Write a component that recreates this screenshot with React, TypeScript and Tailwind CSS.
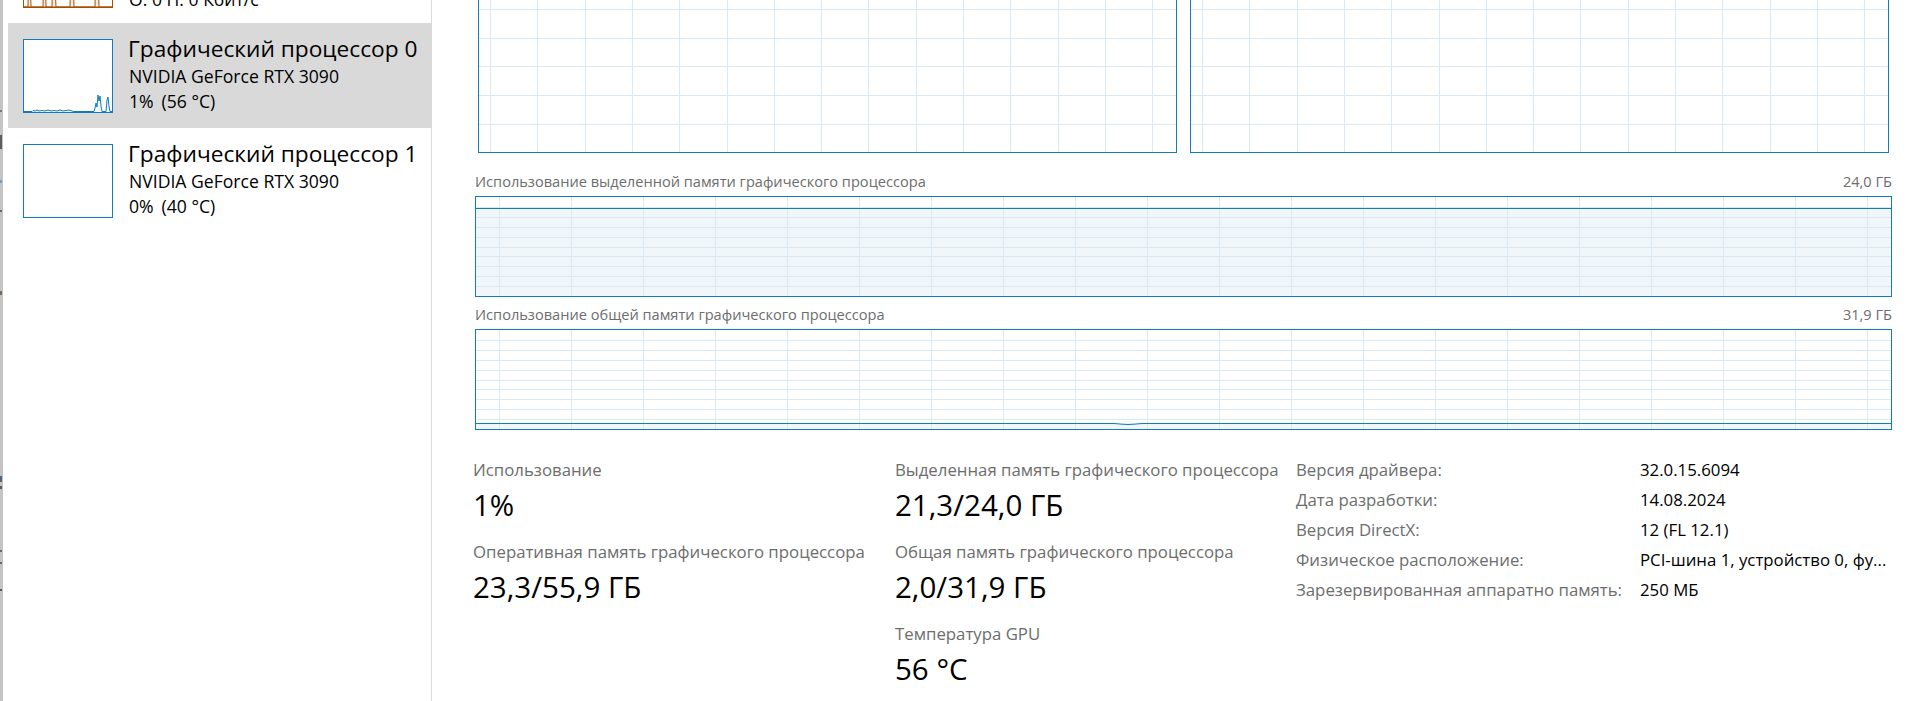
import React from "react";

const BLUE = "#117dbb";
const GRID = "#d9eaf4";
const FILL = "#f1f6fa";

type GridProps = {
  w: number;
  h: number;
  ox: number;
  sx: number;
  oy: number;
  sy: number;
  lineY?: number;
  path?: string;
};

function Grid({ w, h, ox, sx, oy, sy, lineY, path }: GridProps) {
  const vs: number[] = [];
  for (let x = ox; x < w; x += sx) vs.push(Math.round(x));
  const hs: number[] = [];
  for (let y = oy; y < h; y += sy) hs.push(Math.round(y));
  return (
    <svg width={w} height={h} className="block">
      {lineY !== undefined && (
        <rect x={0} y={lineY} width={w} height={h - lineY} fill={FILL} />
      )}
      <g shapeRendering="crispEdges">
        {hs.map((y) => (
          <line key={"h" + y} x1={0} x2={w} y1={y + 0.5} y2={y + 0.5} stroke={GRID} strokeWidth={1} />
        ))}
        {vs.map((x) => (
          <line key={"v" + x} x1={x + 0.5} x2={x + 0.5} y1={0} y2={h} stroke={GRID} strokeWidth={1} />
        ))}
      </g>
      {lineY !== undefined && !path && (
        <line x1={0} x2={w} y1={lineY + 0.5} y2={lineY + 0.5} stroke={BLUE} strokeWidth={1} shapeRendering="crispEdges" />
      )}
      {path && <path d={path} fill="none" stroke={BLUE} strokeWidth={1} />}
    </svg>
  );
}

const marks = [
  { t: 110, h: 2, c: "#7a7a7a" },
  { t: 135, h: 14, c: "#5c5c5c" },
  { t: 180, h: 3, c: "#6f9fc4" },
  { t: 210, h: 2, c: "#6a6a6a" },
  { t: 291, h: 4, c: "#7a6a5a" },
  { t: 476, h: 6, c: "#4f6478" },
  { t: 486, h: 3, c: "#5a5a5a" },
  { t: 550, h: 2, c: "#6a6a6a" },
  { t: 562, h: 2, c: "#6a6a6a" },
  { t: 589, h: 2, c: "#5a5a5a" },
];

function LeftStrip() {
  let prev = 0;
  return (
    <div className="w-[3px] shrink-0 h-full bg-[#c4c4c4] flex flex-col">
      {marks.map((m, i) => {
        const mt = m.t - prev;
        prev = m.t + m.h;
        return (
          <div key={i} className="w-[2px] shrink-0" style={{ marginTop: mt, height: m.h, background: m.c }} />
        );
      })}
    </div>
  );
}

function EthernetThumb() {
  return (
    <div className="w-[90px] h-[74px] border border-[#a74f01] shrink-0 bg-white">
      <svg width={88} height={72} className="block">
        <path
          d="M0 72 L4 72 L5 20 L6 40 L7 72 L19 72 L20 30 L21 10 L22 72 L28 72 L29 25 L31 50 L32 72 L46 72 L47 35 L48 15 L50 72 L71 72 L72 28 L74 45 L75 72 L88 72 Z"
          fill="#fbeee2"
          stroke="#a74f01"
          strokeWidth={1}
        />
      </svg>
    </div>
  );
}

function GpuThumb({ active }: { active: boolean }) {
  return (
    <div className="w-[90px] h-[74px] border border-[#117dbb] shrink-0 bg-white">
      {active && (
        <svg width={88} height={72} className="block">
          <path
            d="M0 71.5 L8 71.5 L9 70.5 L11 71 L13 70 L15 71 L18 70.5 L21 71 L24 70 L27 71 L30 70.5 L33 71 L36 70 L39 71 L42 70.5 L45 70 L48 71 L50 71.5 L70 71.5 L71 68 L72 63 L73 67 L74 55 L75 61 L76 56 L77 66 L78 71.5 L82 71.5 L83 60 L84 57 L85 66 L86 71.5 L88 71.5"
            fill={FILL}
            stroke={BLUE}
            strokeWidth={1}
          />
        </svg>
      )}
    </div>
  );
}

function SideItem({
  thumb,
  title,
  sub,
  stat,
  selected,
  h,
  statClass = "",
}: {
  thumb: React.ReactNode;
  title: string;
  sub: string;
  stat: React.ReactNode;
  selected?: boolean;
  h: string;
  statClass?: string;
}) {
  return (
    <div className={`ml-[5px] flex pl-[15px] pt-[16px] ${h} ${selected ? "bg-[#d9d9d9]" : ""}`}>
      {thumb}
      <div className="ml-[15px] -mt-[6px] flex flex-col text-black">
        <div className="text-[22.7px] leading-[31px] whitespace-nowrap">{title}</div>
        <div className="ml-[1px] text-[17.6px] leading-[25px] whitespace-nowrap">{sub}</div>
        <div className={`ml-[1px] text-[17.6px] leading-[25px] whitespace-nowrap ${statClass}`}>{stat}</div>
      </div>
    </div>
  );
}

function Sidebar() {
  return (
    <div className="w-[429px] shrink-0 h-full border-r border-[#d9d9d9] overflow-hidden bg-white">
      <div className="-mt-[82px] flex flex-col">
        <SideItem
          h="h-[105px]"
          thumb={<EthernetThumb />}
          title="Ethernet"
          sub="Ethernet"
          statClass="mt-[3px]"
          stat={<span>О: 0 П: 0 Кбит/с</span>}
        />
        <SideItem
          h="h-[105px]"
          selected
          thumb={<GpuThumb active />}
          title="Графический процессор 0"
          sub="NVIDIA GeForce RTX 3090"
          stat={
            <span>
              1%<span className="ml-[8px]">(56 °C)</span>
            </span>
          }
        />
        <SideItem
          h="h-[105px]"
          thumb={<GpuThumb active={false} />}
          title="Графический процессор 1"
          sub="NVIDIA GeForce RTX 3090"
          stat={
            <span>
              0%<span className="ml-[8px]">(40 °C)</span>
            </span>
          }
        />
      </div>
    </div>
  );
}

function StatBlock({ label, value, first }: { label: string; value: string; first?: boolean }) {
  return (
    <div className={first ? "" : "mt-[17px]"}>
      <div className="text-[16.8px] leading-[24px] text-[#6d6d6d] whitespace-nowrap">{label}</div>
      <div className="mt-[5px] text-[29.5px] leading-[36px] text-black whitespace-nowrap">{value}</div>
    </div>
  );
}

const info: [string, string][] = [
  ["Версия драйвера:", "32.0.15.6094"],
  ["Дата разработки:", "14.08.2024"],
  ["Версия DirectX:", "12 (FL 12.1)"],
  ["Физическое расположение:", "PCI-шина 1, устройство 0, фу..."],
  ["Зарезервированная аппаратно память:", "250 МБ"],
];

function Main() {
  return (
    <div className="flex-1 h-full pl-[43px] pr-[25px] bg-white overflow-hidden flex flex-col">
      <div className="-mt-[137px] px-[3px] flex gap-[13px] shrink-0">
        <div className="flex-1 h-[290px] border border-[#117dbb]">
          <Grid w={697} h={288} ox={11} sx={47.3} oy={0.8} sy={28.8} />
        </div>
        <div className="flex-1 h-[290px] border border-[#117dbb]">
          <Grid w={697} h={288} ox={11} sx={47.3} oy={0.8} sy={28.8} />
        </div>
      </div>

      <div className="mt-[18px] h-[20px] flex justify-between text-[14.6px] leading-[20px] text-[#6d6d6d] shrink-0">
        <span>Использование выделенной памяти графического процессора</span>
        <span>24,0 ГБ</span>
      </div>
      <div className="mt-[5px] h-[101px] border border-[#117dbb] shrink-0 overflow-hidden">
        <Grid w={1415} h={99} ox={23} sx={72} oy={9.9} sy={9.9} lineY={11} />
      </div>

      <div className="mt-[7px] h-[20px] flex justify-between text-[14.6px] leading-[20px] text-[#6d6d6d] shrink-0">
        <span>Использование общей памяти графического процессора</span>
        <span>31,9 ГБ</span>
      </div>
      <div className="mt-[5px] h-[101px] border border-[#117dbb] shrink-0 overflow-hidden">
        <Grid
          w={1415}
          h={99}
          ox={23}
          sx={72}
          oy={9.9}
          sy={9.9}
          lineY={93}
          path="M0 93.5 L638 93.5 L646 94.2 L652 94.5 L658 94.2 L666 93.5 L1415 93.5"
        />
      </div>

      <div className="mt-[28px] -ml-[2px] flex items-start shrink-0">
        <div className="w-[422px] shrink-0 flex flex-col">
          <StatBlock first label="Использование" value="1%" />
          <StatBlock label="Оперативная память графического процессора" value="23,3/55,9 ГБ" />
        </div>
        <div className="w-[401px] shrink-0 flex flex-col">
          <StatBlock first label="Выделенная память графического процессора" value="21,3/24,0 ГБ" />
          <StatBlock label="Общая память графического процессора" value="2,0/31,9 ГБ" />
          <StatBlock label="Температура GPU" value="56 °C" />
        </div>
        <div className="flex-1 -mt-[3px] grid grid-cols-[344px_1fr] text-[16.8px] leading-[30px]">
          {info.map(([k, v]) => (
            <React.Fragment key={k}>
              <div className="text-[#6d6d6d] whitespace-nowrap">{k}</div>
              <div className="text-black whitespace-nowrap">{v}</div>
            </React.Fragment>
          ))}
        </div>
      </div>
    </div>
  );
}

export default function App() {
  return (
    <div className="w-[1917px] h-[701px] overflow-hidden bg-white flex font-['Open_Sans',sans-serif]">
      <LeftStrip />
      <Sidebar />
      <Main />
    </div>
  );
}
